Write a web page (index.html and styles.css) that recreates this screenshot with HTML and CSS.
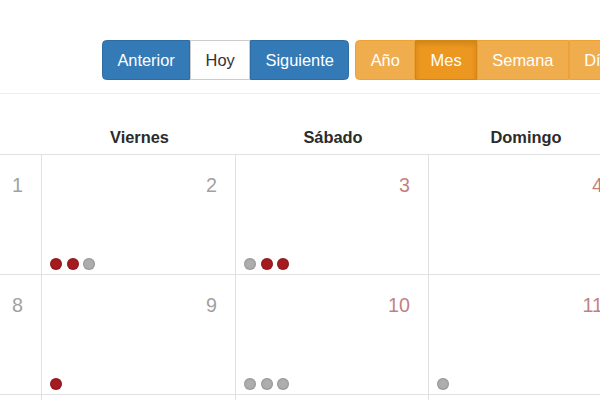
FILE: index.html
```html
<!DOCTYPE html>
<html lang="es">
<head>
<meta charset="utf-8">
<title>Calendario</title>
<link rel="stylesheet" href="styles.css">
</head>
<body>
<div class="toolbar">
  <div class="btn-group">
    <button class="btn btn-primary">Anterior</button>
    <button class="btn btn-default">Hoy</button>
    <button class="btn btn-primary">Siguiente</button>
  </div>
  <div class="btn-group">
    <button class="btn btn-warning">Año</button>
    <button class="btn btn-warning active">Mes</button>
    <button class="btn btn-warning">Semana</button>
    <button class="btn btn-warning">Día</button>
  </div>
</div>

<div class="calendar">
  <div class="row-head">
    <div class="head-cell"></div>
    <div class="head-cell">Viernes</div>
    <div class="head-cell">Sábado</div>
    <div class="head-cell">Domingo</div>
  </div>

  <div class="week">
    <div class="day"><span class="date">1</span></div>
    <div class="day"><span class="date">2</span>
      <div class="events"><i class="dot red"></i><i class="dot red"></i><i class="dot gray"></i></div>
    </div>
    <div class="day weekend"><span class="date">3</span>
      <div class="events"><i class="dot gray"></i><i class="dot red"></i><i class="dot red"></i></div>
    </div>
    <div class="day weekend"><span class="date">4</span></div>
  </div>

  <div class="week">
    <div class="day"><span class="date">8</span></div>
    <div class="day"><span class="date">9</span>
      <div class="events"><i class="dot red"></i></div>
    </div>
    <div class="day weekend"><span class="date">10</span>
      <div class="events"><i class="dot gray"></i><i class="dot gray"></i><i class="dot gray"></i></div>
    </div>
    <div class="day weekend"><span class="date">11</span>
      <div class="events"><i class="dot gray"></i></div>
    </div>
  </div>

  <div class="week">
    <div class="day"><span class="date">15</span></div>
    <div class="day"><span class="date">16</span></div>
    <div class="day weekend"><span class="date">17</span></div>
    <div class="day weekend"><span class="date">18</span></div>
  </div>
</div>
</body>
</html>
```

FILE: styles.css
```css
html, body {
  margin: 0;
  padding: 0;
  background: #fff;
  overflow: hidden;
}

body {
  font-family: "Liberation Sans", Arial, sans-serif;
  color: #333;
  width: 600px;
  height: 400px;
}

.toolbar {
  display: flex;
  gap: 6px;
  padding: 40px 0 13px 102px;
  border-bottom: 1px solid #eee;
  white-space: nowrap;
}

.btn-group {
  display: flex;
  flex-shrink: 0;
}

.btn {
  font-family: inherit;
  font-size: 16.4px;
  line-height: 38px;
  height: 40px;
  padding: 0 14.4px;
  margin: 0;
  border: 1px solid transparent;
  border-radius: 0;
  color: #fff;
  cursor: pointer;
  flex-shrink: 0;
}

.btn-group .btn:first-child {
  border-top-left-radius: 4.5px;
  border-bottom-left-radius: 4.5px;
}

.btn-group .btn:last-child {
  border-top-right-radius: 4.5px;
  border-bottom-right-radius: 4.5px;
}

.btn-primary {
  background: #337ab7;
  border-color: #2e6da4;
}

.btn-default {
  background: #fff;
  border-color: #ccc;
  color: #333;
}

.btn-warning {
  background: #f0ad4e;
  border-color: #eea236;
}

.btn-warning.active {
  background: #ec971f;
  border-color: #d58512;
  box-shadow: inset 0 3px 5px rgba(0, 0, 0, 0.125);
}

.calendar {
  width: 621px;
}

.row-head,
.week {
  display: grid;
  grid-template-columns: 41px 194px 193px 193px;
}

.row-head {
  border-bottom: 1px solid #e1e1e1;
}

.head-cell {
  padding: 33px 0 7px 3px;
  line-height: 20px;
  font-size: 16.4px;
  font-weight: bold;
  text-align: center;
  color: #2b2b2b;
  white-space: nowrap;
}

.week {
  border-bottom: 1px solid #e1e1e1;
}

.day {
  height: 119px;
  display: flex;
  flex-direction: column;
  box-sizing: border-box;
  padding-bottom: 4px;
}

.day + .day {
  border-left: 1px solid #e1e1e1;
}

.date {
  display: block;
  margin-top: 13px;
  padding-right: 18px;
  text-align: right;
  font-size: 19.7px;
  line-height: 35px;
  color: #444;
  opacity: 0.5;
}

.weekend .date {
  color: darkred;
}

.events {
  margin-top: auto;
  padding-left: 8px;
  display: flex;
  gap: 4.5px;
  height: 12px;
}

.dot {
  display: block;
  width: 12px;
  height: 12px;
  border-radius: 50%;
  box-shadow: inset 0 0 2px rgba(0, 0, 0, 0.35);
}

.dot.red {
  background: #a51b1f;
}

.dot.gray {
  background: #adadad;
}
```
